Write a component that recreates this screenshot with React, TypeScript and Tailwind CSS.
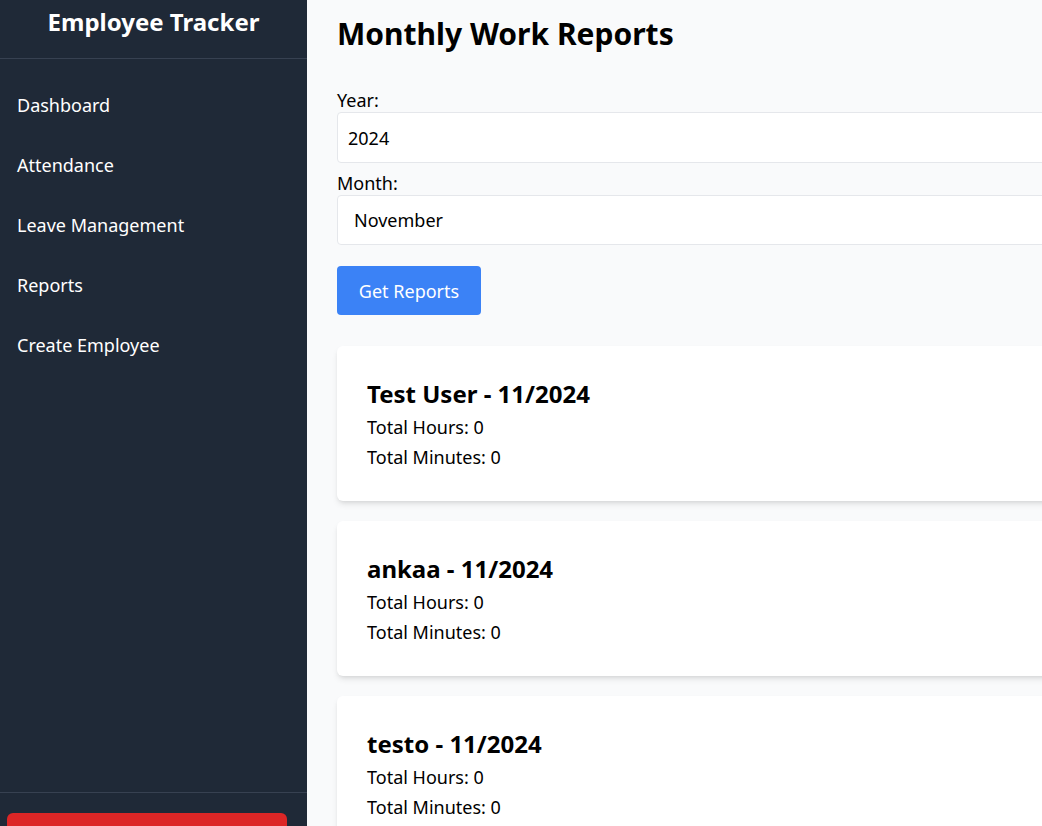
import React from 'react';

const navItems = ['Dashboard', 'Attendance', 'Leave Management', 'Reports', 'Create Employee'];

const reports = [
  { name: 'Test User', hours: 0, minutes: 0 },
  { name: 'ankaa', hours: 0, minutes: 0 },
  { name: 'testo', hours: 0, minutes: 0 },
];

export default function App() {
  return (
    <div className="h-[826px] w-[1042px] overflow-hidden" style={{ fontFamily: '"Noto Sans", "Open Sans", sans-serif' }}>
      <div className="flex min-h-full">
        {/* Sidebar */}
        <aside className="flex w-[307px] shrink-0 flex-col bg-[#1f2937] text-white">
          <div className="border-b border-[#374151] pt-1.5 pb-5 text-center">
            <h2 className="text-2xl leading-8 font-bold">Employee Tracker</h2>
          </div>
          <nav className="flex-1 pt-4">
            {navItems.map((item) => (
              <a key={item} href="#" className="block px-[17px] py-4 text-lg leading-7">
                {item}
              </a>
            ))}
          </nav>
          <div className="border-t border-[#374151] pt-5 pr-5 pb-5 pl-[7px]">
            <button className="h-12 w-full rounded-md bg-[#dc2626] text-lg text-white">Logout</button>
          </div>
        </aside>

        {/* Main */}
        <main className="flex-1 bg-[#f9fafb] pt-4 pb-[30px] pl-[30px]">
          <div className="w-[780px]">
            <h1 className="mb-[36px] text-3xl leading-9 font-bold text-black">Monthly Work Reports</h1>

            <div>
              <label className="block text-lg leading-6 text-black">Year:</label>
              <input
                type="number"
                defaultValue={2024}
                className="h-[51px] w-full rounded border border-[#e5e7eb] bg-white px-2.5 text-lg text-black outline-none"
              />
            </div>
            <div className="mt-2">
              <label className="block text-lg leading-6 text-black">Month:</label>
              <select
                defaultValue="11"
                className="h-[50px] w-full appearance-none rounded border border-[#e5e7eb] bg-white px-4 text-lg text-black outline-none"
              >
                <option value="11">November</option>
              </select>
            </div>

            <button className="mt-[21px] h-[49px] w-36 rounded bg-[#3b82f6] text-lg text-white">Get Reports</button>

            <div className="mt-[31px] flex flex-col gap-5">
              {reports.map((r) => (
                <div key={r.name} className="rounded-md bg-white px-[30px] pt-[30px] pb-[29px] shadow-md">
                  <h3 className="text-2xl leading-9 font-bold text-black">
                    {r.name} - 11/2024
                  </h3>
                  <p className="text-lg leading-[30px] text-black">Total Hours: {r.hours}</p>
                  <p className="text-lg leading-[30px] text-black">Total Minutes: {r.minutes}</p>
                </div>
              ))}
            </div>
          </div>
        </main>
      </div>
    </div>
  );
}
